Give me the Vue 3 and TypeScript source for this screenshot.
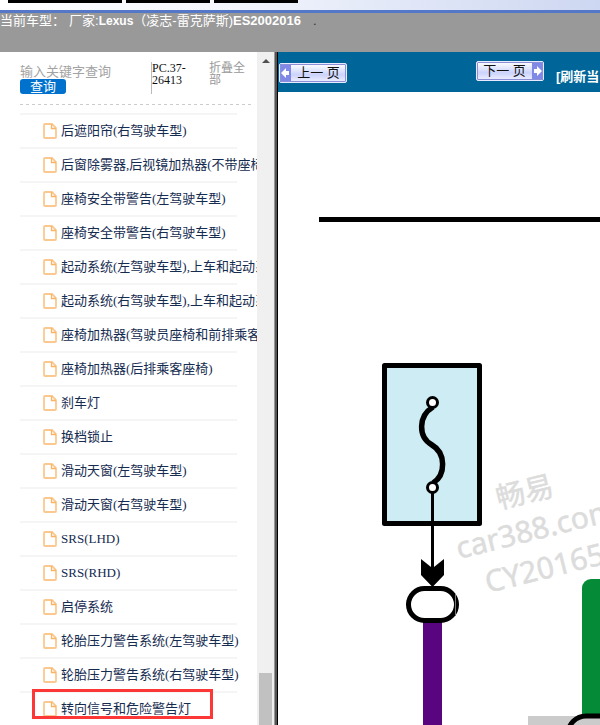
<script setup lang="ts">
import { ref } from 'vue'

const keyword = ref('')
const items: string[] = [
  '后遮阳帘(右驾驶车型)',
  '后窗除雾器,后视镜加热器(不带座椅加热器)',
  '座椅安全带警告(左驾驶车型)',
  '座椅安全带警告(右驾驶车型)',
  '起动系统(左驾驶车型),上车和起动系统',
  '起动系统(右驾驶车型),上车和起动系统',
  '座椅加热器(驾驶员座椅和前排乘客座椅)',
  '座椅加热器(后排乘客座椅)',
  '刹车灯',
  '换档锁止',
  '滑动天窗(左驾驶车型)',
  '滑动天窗(右驾驶车型)',
  'SRS(LHD)',
  'SRS(RHD)',
  '启停系统',
  '轮胎压力警告系统(左驾驶车型)',
  '轮胎压力警告系统(右驾驶车型)',
  '转向信号和危险警告灯',
]
const marked = items.length - 1
</script>

<template>
  <div class="page">
    <div class="strip">
      <span class="tab wide"></span>
      <span class="tab"></span>
      <span class="tab"></span>
    </div>
    <header class="model">
      <span class="label">当前车型：</span>
      <span>厂家:<b>Lexus</b>（凌志-雷克萨斯)<b class="year">ES2002016</b></span>
      <span class="dot">.</span>
    </header>
    <div class="body">
      <aside class="side">
        <form class="search" @submit.prevent>
          <div class="query">
            <input v-model="keyword" type="text" placeholder="输入关键字查询" aria-label="输入关键字查询" />
            <button type="submit">查询</button>
          </div>
          <div class="code">PC.37-26413</div>
          <a class="fold" href="#">折叠全部</a>
        </form>
        <ul class="list">
          <li v-for="(item, i) in items" :key="i">
            <a href="#">
              <svg width="14" height="16" viewBox="0 0 14 16" aria-hidden="true">
                <path d="M2 1H9L13 5V14Q13 15 12 15H2Q1 15 1 14V2Q1 1 2 1Z" fill="none" stroke="#fbc98f" stroke-width="1.8" />
                <path d="M8.5 1V5.5H13" fill="none" stroke="#f8b566" stroke-width="1.3" />
              </svg>
              <span>{{ item }}</span>
            </a>
            <i v-if="i === marked" class="mark"></i>
          </li>
        </ul>
      </aside>
      <div class="scroll">
        <span class="up"></span>
        <span class="thumb"></span>
      </div>
      <div class="divider"></div>
      <main class="view">
        <nav class="bar">
          <button class="nav prev" type="button">
            <span class="arrow">
              <svg width="9" height="10" viewBox="0 0 9 10" aria-hidden="true"><path d="M0 5L5 0V3H8V7H5V10Z" fill="#fff" /></svg>
            </span>
            <span class="word">上一 页</span>
          </button>
          <button class="nav next" type="button">
            <span class="word">下一 页</span>
            <span class="arrow">
              <svg width="9" height="10" viewBox="0 0 9 10" aria-hidden="true"><path d="M9 5L4 0V3H1V7H4V10Z" fill="#fff" /></svg>
            </span>
          </button>
          <a class="refresh" href="#">[刷新当</a>
        </nav>
        <svg class="diagram" aria-label="电路图">
          <g class="watermark">
            <text transform="translate(221 417) rotate(-14)" font-size="29">畅易</text>
            <text transform="translate(181 467) rotate(-14)" font-size="30">car388.com</text>
            <text transform="translate(210 501) rotate(-14)" font-size="30">CY20165</text>
          </g>
          <path d="M41 127.5H2000" stroke="#000" stroke-width="5" fill="none" />
          <rect x="106.500" y="273.500" width="95" height="158" fill="#cdecf3" stroke="#000" stroke-width="5" stroke-linejoin="round" />
          <path d="M154.500 395V475" stroke="#000" stroke-width="3" />
          <path d="M155 315C140 324 140 345 154 353C168 361 168 383 155 391" fill="none" stroke="#000" stroke-width="5.500" />
          <circle cx="154.500" cy="310.500" r="5" fill="#fff" stroke="#000" stroke-width="3" />
          <circle cx="154.500" cy="395.500" r="5" fill="#fff" stroke="#000" stroke-width="3" />
          <path d="M143 467L153 475H156L166 467V483L154.500 495L143 483Z" />
          <path d="M145 529H164V2000H145Z" fill="#590580" />
          <rect x="130.500" y="496.500" width="48" height="32" rx="16" fill="#fff" stroke="#000" stroke-width="5" />
          <path d="M177.500 502V524" stroke="#777" stroke-width="1" />
          <rect x="304" y="487" width="200" height="180" rx="9" fill="#058b38" />
          <rect x="250" y="624" width="800" height="100" fill="#cbcbcb" />
          <rect x="290" y="624" width="100" height="48" rx="18" fill="#cbcbcb" stroke="#000" stroke-width="5" />
        </svg>
      </main>
    </div>
  </div>
</template>

<style>
body {
  margin: 0;
  overflow: hidden;
}
</style>

<style scoped>
.page {
  display: flex;
  flex-direction: column;
  height: 100vh;
  overflow: hidden;
  background: #fff;
  font-family: "Liberation Serif", "Noto Sans CJK SC", serif;
}
a {
  color: inherit;
  text-decoration: none;
}
button,
input {
  box-sizing: border-box;
  margin: 0;
  padding: 0;
  border: 0;
  font-family: inherit;
}
.strip {
  display: flex;
  flex: none;
  gap: 4px;
  height: 10px;
  padding-left: 8px;
  border-bottom: 3px solid #5577c8;
  background: linear-gradient(90deg, #fff, #f5f7fd 35%, #cdd7f1);
}
.tab {
  width: 84px;
  height: 3px;
  background: #000;
}
.tab.wide {
  width: 114px;
}
.model {
  flex: none;
  display: flex;
  height: 39px;
  background: #999;
  color: #fff;
  font: 13px/15px "Liberation Sans", "Noto Sans CJK SC", sans-serif;
  white-space: nowrap;
}
.label {
  width: 69px;
}
.model b {
  font-size: 12px;
}
.model .year {
  font-size: 13px;
}
.dot {
  margin-left: 12px;
  color: #333;
}
.body {
  display: flex;
  flex: 1;
  min-height: 0;
}
.side {
  flex: 0 0 257px;
  overflow: hidden;
  box-sizing: border-box;
  padding-left: 20px;
}
.search {
  display: flex;
  box-sizing: border-box;
  height: 53px;
  margin-right: 6px;
  padding-top: 10px;
  background: repeating-linear-gradient(90deg, #ccc 0 3px, transparent 3px 6px) bottom / 100% 1px no-repeat;
}
.query {
  display: flex;
  flex-direction: column;
  width: 131px;
}
.query input {
  width: 120px;
  height: 17px;
  padding-top: 3px;
  outline: 0;
  background: transparent;
  font-size: 13px;
}
.query input::placeholder {
  color: #a3a3a3;
  opacity: 1;
}
.query button {
  width: 46px;
  height: 15px;
  border-radius: 3px;
  background: #0072ce;
  color: #fff;
  font-size: 13px;
  line-height: 15px;
}
.code {
  box-sizing: border-box;
  width: 40px;
  height: 32px;
  border-left: 1px solid #bbb;
  color: #111;
  font-size: 12px;
  line-height: 12px;
}
.fold {
  width: 37px;
  margin-left: 18px;
  color: #999;
  font-size: 12px;
  line-height: 12px;
}
.list {
  width: 217px;
  margin: 8px 0 0;
  padding: 0;
  list-style: none;
}
.list li {
  position: relative;
  box-sizing: border-box;
  height: 34px;
  border-top: 2px solid #f5f5f5;
}
.list a {
  display: flex;
  align-items: center;
  gap: 4px;
  height: 32px;
  padding-left: 23px;
  color: #152b50;
  font-size: 13px;
  line-height: 16px;
  white-space: nowrap;
}
.list svg {
  flex: none;
}
.mark {
  position: absolute;
  top: -4px;
  left: 12px;
  box-sizing: border-box;
  width: 181px;
  height: 30px;
  border: 3px solid #fd3636;
}
.scroll {
  flex: 0 0 17px;
  display: flex;
  flex-direction: column;
  align-items: center;
  justify-content: space-between;
  background: #f0f0f0;
}
.up {
  margin-top: 7px;
  border: 4px solid transparent;
  border-top: 0;
  border-bottom-color: #505050;
}
.thumb {
  width: 13px;
  height: 52px;
  background: #c1c1c1;
}
.divider {
  flex: 0 0 4px;
  background: linear-gradient(90deg, #999 0 1px, #555 1px 3px, #000 3px);
}
.view {
  display: flex;
  flex: 1;
  flex-direction: column;
  min-width: 0;
  overflow: hidden;
}
.bar {
  display: flex;
  flex: none;
  align-items: flex-start;
  box-sizing: border-box;
  height: 40px;
  padding: 9px 0 0 1px;
  background: #069;
  white-space: nowrap;
}
.nav {
  display: flex;
  flex: none;
  align-items: stretch;
  width: 68px;
  height: 20px;
  border: 1px solid #e8eaff;
  border-radius: 2px;
  outline: 1px solid #8c8fd6;
  outline-offset: -2px;
  background: linear-gradient(#fff, #ccd3fc 60%, #eef0ff);
  color: #111;
  font: 13px/18px "Liberation Sans", "Noto Sans CJK SC", sans-serif;
}
.prev {
  margin-top: 2px;
}
.next {
  margin-left: 129px;
}
.arrow {
  display: flex;
  align-items: center;
  justify-content: center;
  width: 11px;
  background: #8189e6;
}
.word {
  flex: 1;
  text-align: center;
}
.refresh {
  margin: 7px 0 0 12px;
  color: #fff;
  font: bold 13px/18px "Liberation Sans", "Noto Sans CJK SC", sans-serif;
}
.diagram {
  display: block;
  flex: 1;
  width: 100%;
  min-height: 0;
}
.watermark {
  fill: #dcdcdc;
  stroke: #dcdcdc;
  stroke-width: 0.5;
  font-family: "Noto Sans", "Noto Sans CJK SC", sans-serif;
}
</style>
